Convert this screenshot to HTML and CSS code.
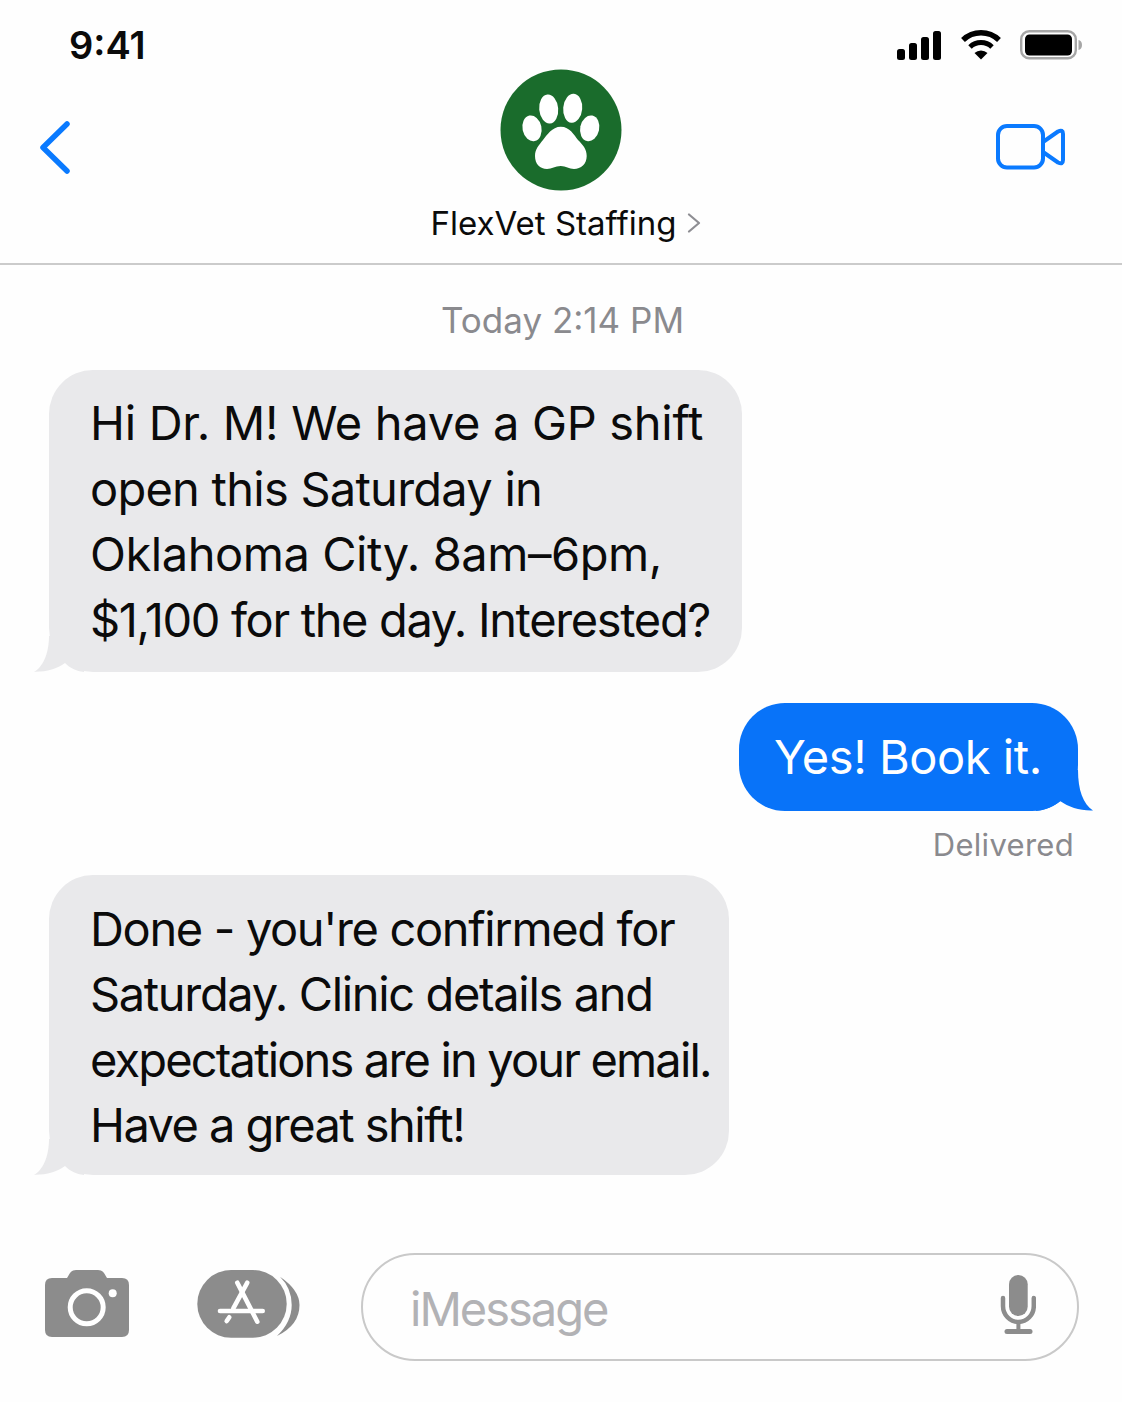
FILE: index.html
```html
<!DOCTYPE html>
<html lang="en">
<head>
    <meta charset="UTF-8">
    <meta name="viewport" content="width=device-width, initial-scale=1.0">
    <title>FlexVet Staffing</title>
    <link rel="stylesheet" href="styles.css">
</head>
<body>
    <div class="status-bar">
        <span class="clock">9:41</span>
        <div class="status-icons">
            <svg class="signal" width="46" height="29" viewBox="0 0 46 29">
                <rect x="1" y="18" width="8" height="11" rx="2.5"/>
                <rect x="13" y="12" width="8" height="17" rx="2.5"/>
                <rect x="25" y="6" width="8" height="23" rx="2.5"/>
                <rect x="37" y="0" width="8" height="29" rx="2.5"/>
            </svg>
            <svg class="wifi" width="40" height="30" viewBox="0 0 40 30">
                <path d="M2 10 A26 26 0 0 1 38 10" fill="none" stroke="#000" stroke-width="5.5"/>
                <path d="M9 17 A16 16 0 0 1 31 17" fill="none" stroke="#000" stroke-width="5"/>
                <path d="M20 29.5 L13.5 23 A9.5 9.5 0 0 1 26.5 23 Z"/>
            </svg>
            <svg class="battery" width="62" height="30" viewBox="0 0 62 30">
                <rect x="1.2" y="1.2" width="54.6" height="27" rx="8" fill="none" stroke="#a6a6a6" stroke-width="2.4"/>
                <rect x="5" y="4.5" width="47" height="21" rx="4.5"/>
                <path d="M58.5 10 C60.5 10.5 62 12 62 15 C62 18 60.5 19.5 58.5 20 Z" fill="#a6a6a6"/>
            </svg>
        </div>
    </div>

    <!-- Contact header -->
    <header class="contact-bar">
        <svg class="back-icon" width="34" height="56" viewBox="0 0 34 56">
            <path d="M29 4 L5 27.5 L29 51" fill="none" stroke="#0a7aff" stroke-width="5.5" stroke-linecap="round" stroke-linejoin="round"/>
        </svg>
        <div class="contact">
            <svg class="avatar" width="122" height="122" viewBox="0 0 122 122">
                <circle cx="61" cy="61" r="60.5" fill="#1a6c2c"/>
                <g fill="#fff">
                    <ellipse cx="32" cy="59.3" rx="9.5" ry="13" transform="rotate(-12 32 59.3)"/>
                    <ellipse cx="48.7" cy="40" rx="9.5" ry="14.5" transform="rotate(-5 48.7 40)"/>
                    <ellipse cx="72.7" cy="39.3" rx="9.5" ry="14.5" transform="rotate(5 72.7 39.3)"/>
                    <ellipse cx="89.7" cy="59.3" rx="9.5" ry="13" transform="rotate(12 89.7 59.3)"/>
                    <path d="M60.8 57.7 C70 57.7 74 66 78 71 C83 76 86.7 80 86.7 87 C86.7 95 81 100 74 100 C69 100 66 97 60.8 97 C55 97 52 100 47 100 C40 100 35 95 35 87 C35 80 39 76 43 71 C47 66 52 57.7 60.8 57.7 Z"/>
                </g>
            </svg>
            <div class="contact-name">
                <span>FlexVet Staffing</span>
                <svg width="14" height="20" viewBox="0 0 14 20">
                    <path d="M2 1.5 L12 10 L2 18.5" fill="none" stroke="#8e8e93" stroke-width="2.2" stroke-linecap="round" stroke-linejoin="round"/>
                </svg>
            </div>
        </div>
        <svg class="video-icon" width="72" height="48" viewBox="0 0 72 48">
            <rect x="3" y="3" width="45" height="41.5" rx="9" fill="none" stroke="#0a7aff" stroke-width="4"/>
            <path d="M48 19 L63 8.5 Q68 6 68 11 V37 Q68 42 63 39.5 L48 29" fill="none" stroke="#0a7aff" stroke-width="4" stroke-linejoin="round"/>
        </svg>
    </header>

    <main class="thread">
        <div class="timestamp">Today 2:14 PM</div>

        <div class="bubble incoming first-offer">
            <span class="line track-a">Hi Dr. M! We have a GP shift</span>
            <span class="line track-c">open this Saturday in</span>
            <span class="line track-b">Oklahoma City. 8am–6pm,</span>
            <span class="line track-d">$1,100 for the day. Interested?</span>
            <svg class="tail" width="52" height="40" viewBox="0 0 52 40">
                <path d="M16 4 C16 23 9 36 1 39.7 C13 40 24 37 32 31 C37 36 43 39 51 40 L51 4 Z" fill="#e9e9eb"/>
            </svg>
        </div>

        <div class="bubble outgoing">
            <span class="line track-b">Yes! Book it.</span>
            <svg class="tail" width="64" height="41" viewBox="0 0 64 41">
                <path d="M48 0 C48 20 53 34 63 40.5 C50 41 39 37 30 31 C25 36 16 40 6 41 L6 22 L20 22 L20 0 Z" fill="#0873f9"/>
            </svg>
        </div>
        <div class="delivered">Delivered</div>

        <div class="bubble incoming confirmation">
            <span class="line track-d">Done - you're confirmed for</span>
            <span class="line track-d">Saturday. Clinic details and</span>
            <span class="line track-e">expectations are in your email.</span>
            <span class="line track-f">Have a great shift!</span>
            <svg class="tail" width="52" height="40" viewBox="0 0 52 40">
                <path d="M16 4 C16 23 9 36 1 39.7 C13 40 24 37 32 31 C37 36 43 39 51 40 L51 4 Z" fill="#e9e9eb"/>
            </svg>
        </div>
    </main>

    <footer class="composer">
        <svg class="camera-icon" width="84" height="67" viewBox="0 0 84 67">
            <path d="M7 8 H22 L25 3 Q27 0 31 0 H53 Q57 0 59 3 L62 8 H77 Q84 8 84 15 V60 Q84 67 77 67 H7 Q0 67 0 60 V15 Q0 8 7 8 Z" fill="#8c8c8c"/>
            <circle cx="41.7" cy="37.3" r="16.5" fill="none" stroke="#fff" stroke-width="5"/>
            <circle cx="67.7" cy="23.3" r="4" fill="#fff"/>
        </svg>
        <svg class="apps-icon" width="104" height="68" viewBox="0 0 104 68">
            <path d="M83 6.7 Q102.5 20 102.5 35 Q102.5 55 80 66 Q94.7 52 94.7 35 Q94.7 18 83 6.7 Z" fill="#8c8c8c"/>
            <rect x="0.3" y="0" width="89.4" height="67.7" rx="33.8" fill="#8c8c8c"/>
            <g fill="none" stroke="#fff" stroke-width="4.6" stroke-linecap="round">
                <path d="M40.3 12.7 L60.3 51.7"/>
                <path d="M50.3 12.7 L36.3 38.3"/>
                <path d="M32.3 47.3 L29.7 51"/>
                <path d="M23 41 H65.7"/>
            </g>
        </svg>
        <div class="message-input">
            <span class="placeholder">iMessage</span>
            <svg class="mic-icon" width="36" height="60" viewBox="0 0 36 60">
                <rect x="9" y="0" width="18.7" height="41" rx="9.3" fill="#8c8c8c"/>
                <path d="M3 23 V31 A15.4 16 0 0 0 33.8 31 V23" fill="none" stroke="#8c8c8c" stroke-width="4.5" stroke-linecap="round"/>
                <path d="M18.4 47 V56" fill="none" stroke="#8c8c8c" stroke-width="4"/>
                <path d="M7 56.5 H30" fill="none" stroke="#8c8c8c" stroke-width="5" stroke-linecap="round"/>
            </svg>
        </div>
    </footer>
</body>
</html>
```

FILE: styles.css
```css
body {
    margin: 0;
    background-color: #fefefe;
    color: #0b0b0b;
    font-family: 'Inter', 'Liberation Sans', sans-serif;
}
svg {
    display: block;
    flex-shrink: 0;
}
.status-bar {
    display: flex;
    justify-content: space-between;
    align-items: center;
    height: 48px;
    padding: 21px 40px 0 69px;
}
.clock {
    font-size: 38px;
    font-weight: 600;
    line-height: 48px;
}
.status-icons {
    display: flex;
    align-items: center;
    gap: 19px;
}
.contact-bar {
    display: grid;
    grid-template-columns: 1fr auto 1fr;
    align-items: start;
    height: 194px;
    padding: 0 38px;
    border-bottom: 2px solid #cbcbcb;
}
.back-icon {
    margin-top: 51px;
}
.video-icon {
    margin: 54px 17px 0 0;
    justify-self: end;
}
.contact {
    display: flex;
    flex-direction: column;
    align-items: center;
}
.contact-name {
    display: flex;
    align-items: center;
    gap: 11px;
    margin: 10px 0 0 10px;
    font-size: 33px;
    line-height: 44px;
}
.thread {
    display: flex;
    flex-direction: column;
    padding: 35px 44px 0 49px;
}
.timestamp {
    text-align: center;
    font-size: 35px;
    line-height: 40px;
    color: #8a8a8e;
    margin-right: 2px;
}
.bubble {
    position: relative;
    box-sizing: border-box;
    font-size: 47px;
    line-height: 65.5px;
    white-space: nowrap;
    border-radius: 44px;
}
.bubble .tail {
    position: absolute;
    bottom: 0;
}
.line {
    display: block;
}
/* letter spacing per line, the reference font is narrower in some words */
.track-a {
    letter-spacing: -0.3px;
}
.track-b {
    letter-spacing: -0.45px;
}
.track-c {
    letter-spacing: -0.75px;
}
.track-d {
    letter-spacing: -1.35px;
}
.track-e {
    letter-spacing: -1.84px;
}
.track-f {
    letter-spacing: -1.55px;
}
.incoming {
    align-self: flex-start;
    background-color: #e9e9eb;
    padding: 20px 0 20px 41px;
}
.incoming .tail {
    left: -16px;
}
.first-offer {
    width: 693px;
    margin-top: 30px;
}
.confirmation {
    width: 680px;
    margin-top: 12px;
    padding-top: 21px;
    padding-bottom: 17px;
}
.outgoing {
    align-self: flex-end;
    width: 339px;
    margin-top: 31px;
    padding: 21px 0 21px 35px;
    background-color: #0873f9;
    color: white;
    border-radius: 46px;
}
.outgoing .tail {
    right: -16px;
}
.delivered {
    align-self: flex-end;
    margin: 16px 4px 0 0;
    font-size: 31px;
    letter-spacing: 0.3px;
    line-height: 36px;
    color: #8a8a8e;
}
.composer {
    display: flex;
    align-items: flex-start;
    margin-top: 78px;
    padding: 0 43px 0 45px;
}
.camera-icon {
    margin: 17px 68px 0 0;
}
.apps-icon {
    margin: 17px 60px 0 0;
}
.message-input {
    flex: 1;
    display: flex;
    justify-content: space-between;
    align-items: center;
    box-sizing: border-box;
    height: 108px;
    padding: 0 41px 3px 47px;
    border: 2px solid #c9c9c9;
    border-radius: 54px;
}
.placeholder {
    margin-top: 6px;
    font-size: 47px;
    letter-spacing: -2px;
    color: #b2b2b5;
}
```
